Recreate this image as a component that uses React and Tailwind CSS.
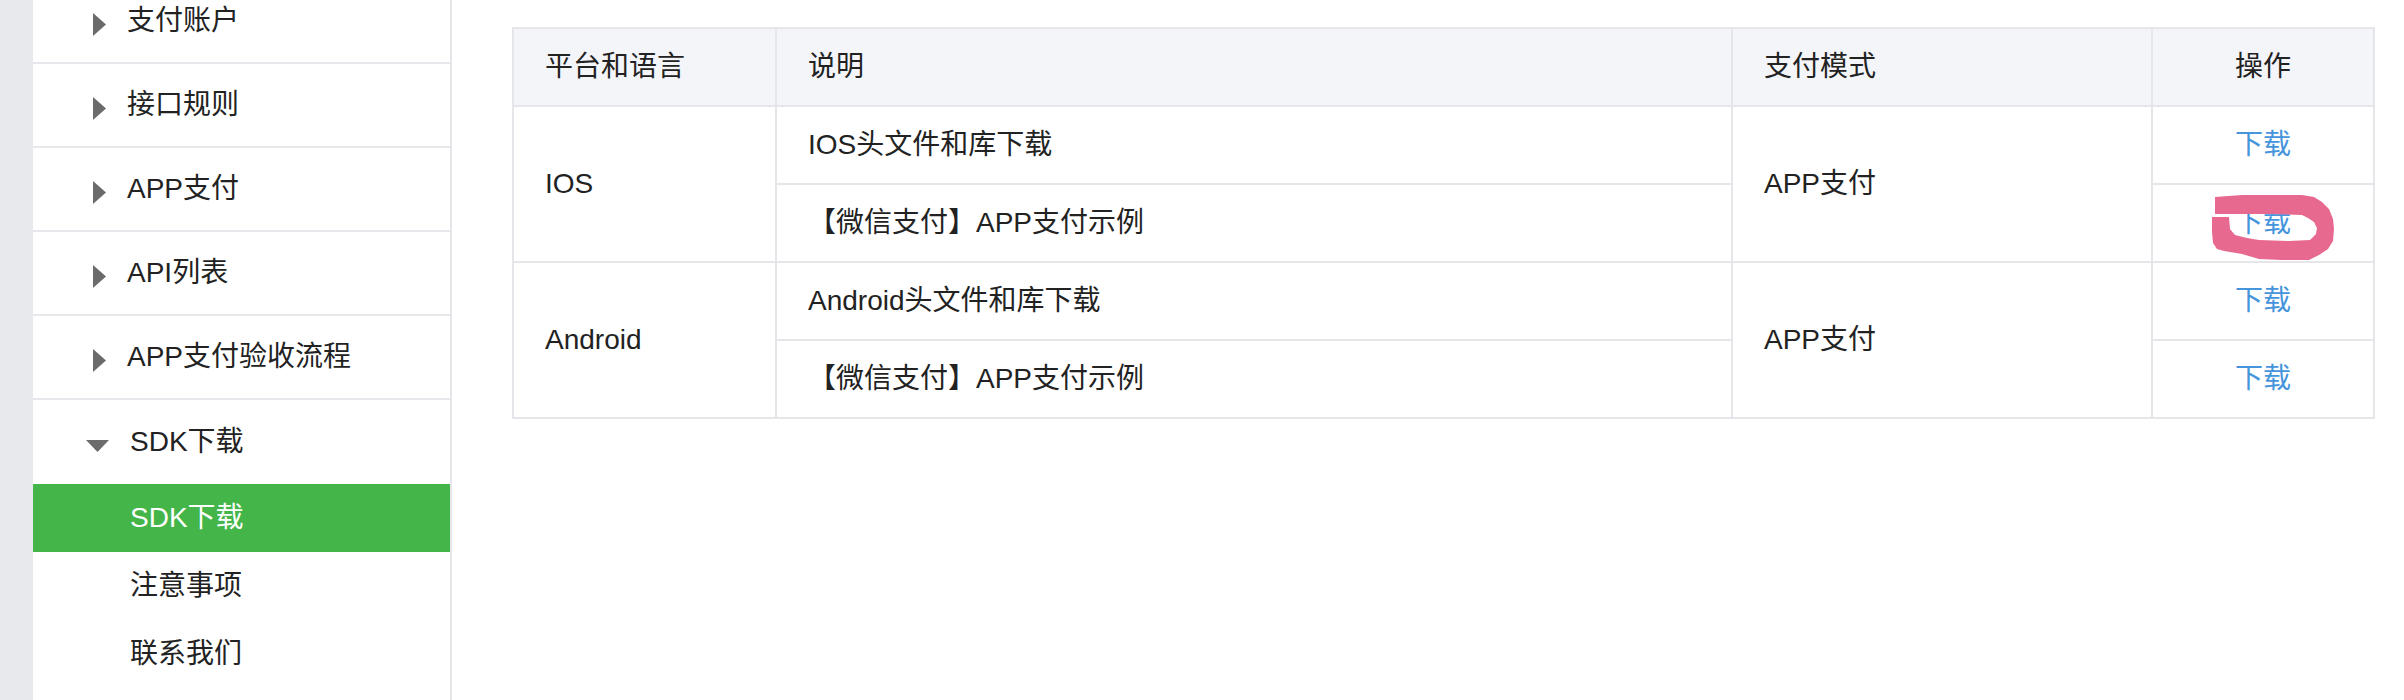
import React from "react";

const menu = ["支付账户", "接口规则", "APP支付", "API列表", "APP支付验收流程"];
const subMenu = [
  { label: "SDK下载", active: true },
  { label: "注意事项" },
  { label: "联系我们" },
];

const rows = [
  {
    platform: "IOS",
    mode: "APP支付",
    items: ["IOS头文件和库下载", "【微信支付】APP支付示例"],
  },
  {
    platform: "Android",
    mode: "APP支付",
    items: ["Android头文件和库下载", "【微信支付】APP支付示例"],
  },
];

const ArrowRight = () => (
  <svg width="13" height="23" viewBox="0 0 13 23" className="shrink-0">
    <polygon points="0,0 13,11.5 0,23" fill="#6b6b6b" />
  </svg>
);

const ArrowDown = () => (
  <svg width="23" height="12" viewBox="0 0 23 12" className="shrink-0">
    <polygon points="0,0 23,0 11.5,12" fill="#6b6b6b" />
  </svg>
);

// hand drawn marker loop around the second download link
const Scribble = () => (
  <svg
    width="140"
    height="80"
    viewBox="0 0 140 80"
    className="absolute left-[49px] top-[2px] pointer-events-none"
  >
    <path
      d="M 13 10 L 40 8 L 100 8 L 112 10 L 120 15 L 127 22 L 131 32 L 132 42 L 131 54 L 126 62 L 117 68 L 107 73 L 80 73 L 57 72 L 40 67 L 22 64 L 15 62 L 11 56 L 10 45 L 10 30 L 27 30 L 28 42 L 33 48 L 45 51 L 57 53 L 87 54 L 108 53 L 114 47 L 115 41 L 112 35 L 106 31 L 100 28 L 70 27 L 28 27 L 13 27 Z"
      fill="#e8698f"
    />
  </svg>
);

const Sidebar = () => (
  <div className="w-[419px] shrink-0 bg-white border-r-2 border-[#e6e6ea] overflow-hidden">
    <div className="-mt-[20px]">
      {menu.map((label) => (
        <div
          key={label}
          className="h-[84px] flex items-center gap-[21px] pl-[60px] border-b-2 border-[#e8e8ec]"
        >
          <div className="pt-[6px]">
            <ArrowRight />
          </div>
          <span>{label}</span>
        </div>
      ))}
      <div className="h-[84px] flex items-center gap-[21px] pl-[53px]">
        <div className="pt-[8px]">
          <ArrowDown />
        </div>
        <span>SDK下载</span>
      </div>
      {subMenu.map((item) => (
        <div
          key={item.label}
          className={
            item.active
              ? "h-[68px] flex items-center pl-[97px] bg-[#44b549] text-white"
              : "h-[68px] flex items-center pl-[97px]"
          }
        >
          {item.label}
        </div>
      ))}
    </div>
  </div>
);

const DownloadTable = () => (
  <table className="w-[1861px] border-collapse border-2 border-[#e6e6ea] table-fixed">
    <thead>
      <tr className="bg-[#f4f5f9] h-[78px]">
        <th className="w-[263px] border-2 border-[#e6e6ea] font-normal text-left pl-[31px]">平台和语言</th>
        <th className="w-[956px] border-2 border-[#e6e6ea] font-normal text-left pl-[31px]">说明</th>
        <th className="w-[420px] border-2 border-[#e6e6ea] font-normal text-left pl-[31px]">支付模式</th>
        <th className="w-[222px] border-2 border-[#e6e6ea] font-normal text-center">操作</th>
      </tr>
    </thead>
    <tbody>
      {rows.map((row, ri) =>
        row.items.map((item, i) => (
          <tr key={`${ri}-${i}`} className="h-[78px]">
            {i === 0 && (
              <td rowSpan={2} className="border-2 border-[#e6e6ea] pl-[31px]">
                {row.platform}
              </td>
            )}
            <td className="border-2 border-[#e6e6ea] pl-[31px]">{item}</td>
            {i === 0 && (
              <td rowSpan={2} className="border-2 border-[#e6e6ea] pl-[31px]">
                {row.mode}
              </td>
            )}
            <td className="border-2 border-[#e6e6ea] text-center relative">
              <a className="text-[#4594dc] cursor-pointer">下载</a>
              {ri === 0 && i === 1 && <Scribble />}
            </td>
          </tr>
        ))
      )}
    </tbody>
  </table>
);

export default function App() {
  return (
    <div
      className="flex h-[700px] w-[2404px] overflow-hidden bg-white text-[28px] text-[#222]"
      style={{ fontFamily: '"Liberation Sans", "Noto Sans CJK SC", sans-serif' }}
    >
      <div className="w-[33px] shrink-0 bg-[#e8e9ed]" />
      <Sidebar />
      <div className="flex-1 pl-[60px] pt-[27px]">
        <DownloadTable />
      </div>
    </div>
  );
}
